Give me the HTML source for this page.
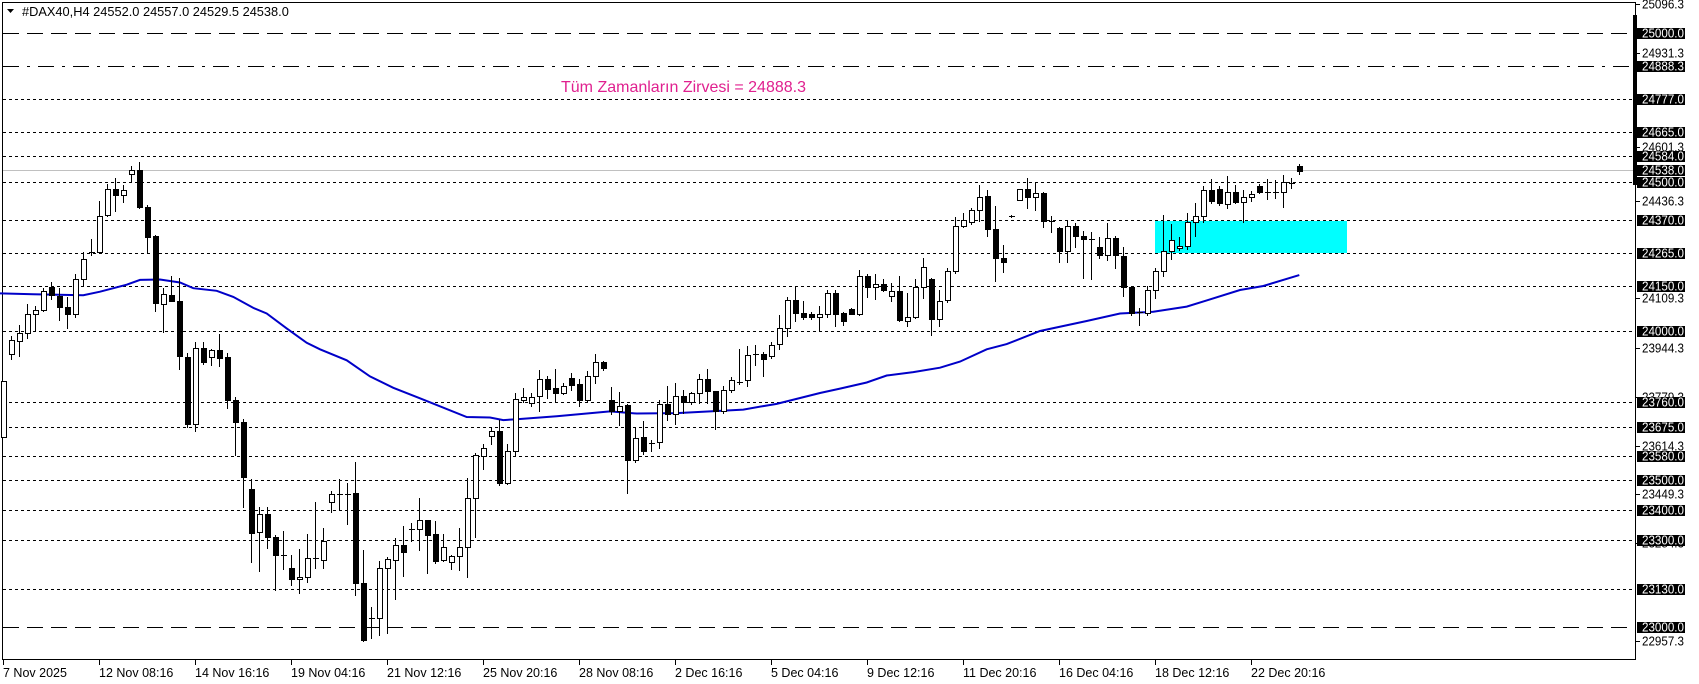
<!DOCTYPE html>
<html><head><meta charset="utf-8"><style>
body{margin:0;background:#fff;width:1699px;height:684px;overflow:hidden;font-family:"Liberation Sans",Arial,sans-serif}
svg{position:absolute;left:0;top:0}
</style></head><body>
<svg id="s" width="1699" height="684" xmlns="http://www.w3.org/2000/svg" font-family="Liberation Sans, Arial, sans-serif">
<rect x="2.5" y="2.5" width="1633" height="657" fill="none" stroke="#000" stroke-width="1"/>
<g id="lines" stroke="#000" stroke-width="1"></g>
<line x1="3" y1="170.5" x2="1635" y2="170.5" stroke="#c0c0c0"/>
<rect x="1155" y="221" width="192" height="32" fill="#00ffff"/>
<polyline id="ma" fill="none" stroke="#0000c8" stroke-width="2"/>
<g id="c"></g>
<text x="561" y="92" font-size="16" fill="#e0208f">Tüm Zamanların Zirvesi = 24888.3</text>
<path d="M7 9 L14 9 L10.5 13 Z" fill="#000"/>
<text x="22" y="16" font-size="12.8" fill="#000">#DAX40,H4  24552.0 24557.0 24529.5 24538.0</text>
<rect x="1633" y="15" width="4" height="170" fill="#000"/>
<g id="ax" font-size="12.5"></g>
<g id="tx" font-size="12.5"></g>
</svg>
<script>
var NS="http://www.w3.org/2000/svg";
function el(t,a,p,txt){var e=document.createElementNS(NS,t);for(var k in a)e.setAttribute(k,a[k]);if(txt)e.textContent=txt;p.appendChild(e);return e;}
var L=document.getElementById('lines');
var lines=[[32.5,"16,8"],[66,"16,8,3,8"],[99,"3,3"],[132,"3,3"],[156,"3,3"],[182,"3,3"],[220,"3,3"],[253,"3,3"],[286,"3,3"],[331,"3,3"],[402,"3,3"],[427,"3,3"],[456,"3,3"],[480,"3,3"],[510,"3,3"],[540,"3,3"],[589,"3,3"],[627,"16,8"]];
lines.forEach(function(l){var y=Math.round(l[0])+0.5;el('line',{x1:3,y1:y,x2:1634,y2:y,'stroke-dasharray':l[1]},L);});
var F=2.29;
var D=[[873,1000,873,1000,0],[778,810,770,822,0],[763,780,745,815,0],[720,763,697,775,0],[711,720,700,755,0],[667,711,660,712,0],[657,675,645,685,1],[678,703,660,733,1],[702,718,680,750,1],[640,718,628,725,0],[593,640,578,652,0],[578,578,548,585,0],[494,578,460,580,0],[433,493,422,495,0],[433,446,408,484,1],[434,446,423,462,0],[390,398,380,415,0],[390,474,370,476,1],[473,542,470,580,1],[541,695,538,712,1],[673,696,660,760,0],[675,690,633,690,1],[690,816,636,845,1],[817,972,808,978,1],[796,972,783,987,0],[796,828,783,834,1],[802,817,800,835,0],[802,820,766,838,1],[818,915,808,935,1],[915,966,908,1043,1],[966,1092,960,1160,1],[1120,1220,1098,1287,1],[1178,1218,1160,1308,0],[1178,1230,1160,1255,1],[1230,1271,1225,1350,1],[1272,1272,1216,1304,0],[1300,1326,1272,1340,1],[1321,1326,1257,1358,0],[1278,1321,1222,1333,0],[1278,1278,1150,1300,0],[1240,1282,1208,1300,0],[1132,1150,1124,1173,0],[1132,1132,1098,1168,0],[1132,1132,1106,1200,0],[1130,1335,1058,1362,1],[1335,1465,1260,1468,1],[1416,1416,1390,1460,0],[1300,1416,1285,1455,0],[1280,1300,1275,1450,0],[1248,1282,1232,1372,0],[1248,1263,1205,1318,1],[1212,1212,1198,1238,0],[1190,1212,1140,1260,0],
[1190,1225,1190,1313,1],[1222,1285,1192,1290,1],[1252,1282,1222,1284,0],[1273,1287,1270,1303,0],[1252,1273,1210,1305,0],[1140,1252,1095,1322,0],[1042,1140,1038,1230,0],[1026,1045,1016,1075,0],[987,998,980,1016,0],[987,1106,962,1110,1],[1032,1106,1016,1108,0],[913,1032,900,1042,0],[908,915,888,920,0],[908,922,900,930,0],[867,907,848,942,0],[867,890,862,912,1],[888,900,844,918,1],[885,900,878,902,0],[865,882,855,892,1],[880,915,868,930,1],[862,915,850,920,0],[830,862,810,878,0],[830,842,826,848,1],[916,942,886,948,1],[930,942,898,973,0],[928,1053,926,1128,1],[1003,1053,980,1058,0],[1000,1033,963,1040,1],[1015,1015,1008,1032,0],[926,1012,916,1027,0],[926,947,885,962,1],[906,947,878,970,0],[906,921,893,946,1],[900,920,898,925,0],[868,899,856,922,0],[868,895,846,924,1],[896,942,896,982,1],[893,942,884,946,0],[870,893,864,898,0],[874,874,800,880,0],[813,870,792,884,0],[810,810,790,836,0],[810,822,806,860,1],[790,815,784,820,0],[752,788,722,800,0],[688,752,680,770,0],[688,716,654,734,1],[716,726,690,730,1],[718,727,714,730,1],[720,727,700,755,0],[670,720,665,725,0],
[670,720,665,746,1],[717,735,714,744,1],[708,718,706,720,1],[632,718,618,722,0],[631,658,628,680,1],[650,658,628,684,0],[651,664,638,666,1],[667,677,648,690,0],[667,733,631,735,1],[725,734,672,746,0],[658,725,640,728,0],[612,658,590,682,0],[640,730,636,768,1],[690,730,664,746,0],[620,688,614,692,0],[518,620,496,625,0],[503,518,487,520,0],[482,508,477,512,0],[450,482,424,506,0],[448,525,436,540,1],[524,590,472,644,1],[590,600,562,624,1],[495,495,493,497,0],[432,458,432,458,0],[432,452,408,476,1],[443,452,420,482,0],[442,505,440,520,1],[505,505,494,532,0],[522,575,520,600,1],[518,574,505,600,0],[518,541,510,566,1],[540,548,528,636,1],[548,548,532,640,0],[565,584,543,590,1],[544,585,511,596,0],[544,585,540,614,1],[586,658,565,678,1],[658,716,655,722,1],[714,714,706,745,0],[665,716,654,722,0],[620,665,614,682,0],[575,620,492,632,0],[550,575,513,594,0],[563,568,542,572,0],[508,563,488,570,0],[494,508,466,540,0],[434,494,426,508,0],[434,460,410,465,1],[432,466,426,470,1],[440,468,402,477,0],[440,462,424,465,1],
[451,462,434,508,0],[444,450,438,460,0],[426,440,422,442,1],[440,440,410,456,0],[440,440,412,454,0],[416,440,400,474,0],[418,418,408,430,0],[380,392,375,398,1]];
var C=document.getElementById('c');
D.forEach(function(d,i){var x=Math.round(3.3+8*i)+0.5;var t=Math.round(d[0]/F),b=Math.round(d[1]/F),h=Math.round(d[2]/F),l=Math.round(d[3]/F);
el('line',{x1:x,y1:h,x2:x,y2:l+1,stroke:'#000'},C);
if(b-t<1){el('line',{x1:x-2.5,y1:t+0.5,x2:x+3.5,y2:t+0.5,stroke:'#000'},C);}
else el('rect',{x:x-2,y:t+0.5,width:5,height:b-t,fill:d[4]?'#000':'#fff',stroke:'#000'},C);});
var M=[[0,672],[100,674],[250,676],[300,668],[380,652],[420,641],[480,640],[540,647],[580,660],[650,666],[700,680],[760,705],[800,718],[860,752],[920,785],[960,800],[1040,825],[1110,862],[1180,888],[1260,912],[1400,955],[1470,956],[1510,962],[1550,960],[1670,953],[1830,942],[1910,947],[2030,946],[2130,942],[2230,938],[2290,930],[2330,925],[2460,900],[2520,890],[2600,876],[2660,860],[2740,852],[2820,842],[2880,828],[2960,800],[3020,788],[3120,758],[3260,735],[3360,718],[3460,714],[3560,702],[3620,688],[3720,664],[3790,655],[3898,630]];
document.getElementById('ma').setAttribute('points',M.map(function(p){return (p[0]/3).toFixed(1)+','+(p[1]/F).toFixed(1)}).join(' '));
var A=document.getElementById('ax');
[[4,"25096.3"],[53,"24931.3"],[147,"24601.3"],[201,"24436.3"],[298,"24109.3"],[348,"23944.3"],[397,"23779.3"],[446,"23614.3"],[494,"23449.3"],[543,"23284.3"],[641,"22957.3"]].forEach(function(g){el('line',{x1:1636,y1:g[0]+0.5,x2:1640,y2:g[0]+0.5,stroke:'#000'},A);el('text',{x:1642,y:g[0]+4.5,fill:'#000',textLength:42,lengthAdjust:'spacingAndGlyphs'},A,g[1]);});
[[32.5,"25000.0"],[66,"24888.3"],[99,"24777.0"],[132,"24665.0"],[156,"24584.0"],[170,"24538.0"],[182,"24500.0"],[220,"24370.0"],[253,"24265.0"],[286,"24150.0"],[331,"24000.0"],[402,"23760.0"],[427,"23675.0"],[456,"23580.0"],[480,"23500.0"],[510,"23400.0"],[540,"23300.0"],[589,"23130.0"],[627,"23000.0"]].forEach(function(g){var y=Math.round(g[0]);el('rect',{x:1637,y:y-5,width:48,height:11,fill:'#000'},A);el('text',{x:1642,y:y+4.5,fill:'#fff',textLength:42,lengthAdjust:'spacingAndGlyphs'},A,g[1]);});
var T=document.getElementById('tx');
[[3,"7 Nov 2025"],[99,"12 Nov 08:16"],[195,"14 Nov 16:16"],[291,"19 Nov 04:16"],[387,"21 Nov 12:16"],[483,"25 Nov 20:16"],[579,"28 Nov 08:16"],[675,"2 Dec 16:16"],[771,"5 Dec 04:16"],[867,"9 Dec 12:16"],[963,"11 Dec 20:16"],[1059,"16 Dec 04:16"],[1155,"18 Dec 12:16"],[1251,"22 Dec 20:16"]].forEach(function(g){el('line',{x1:g[0]+0.5,y1:660,x2:g[0]+0.5,y2:665,stroke:'#000'},T);el('text',{x:g[0],y:677,fill:'#000'},T,g[1]);});
</script>
</body></html>
